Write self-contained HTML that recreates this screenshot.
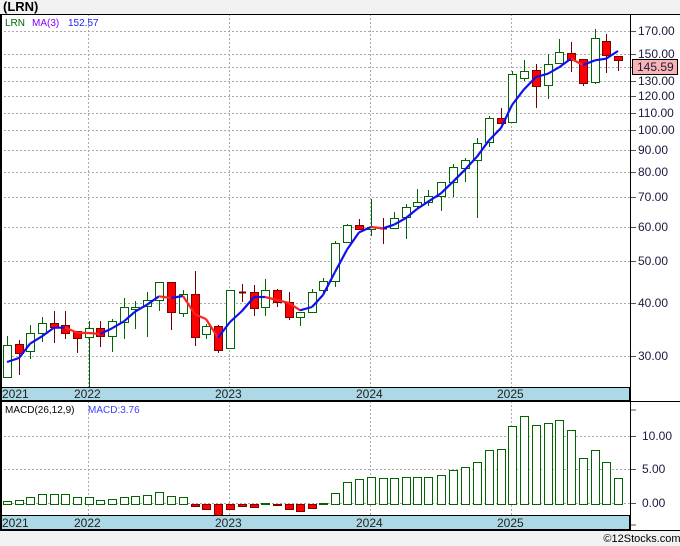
<!DOCTYPE html>
<html><head><meta charset="utf-8"><style>
html,body{margin:0;padding:0;background:#f2f2f2;}
svg{display:block;font-family:"Liberation Sans",sans-serif;}
</style></head><body>
<svg id="s" width="680" height="546" viewBox="0 0 680 546" xmlns="http://www.w3.org/2000/svg">
<rect x="0" y="0" width="680" height="546" fill="#f2f2f2"/>
<text x="3" y="11" font-size="13" font-weight="bold" fill="#000">(LRN)</text>
<rect x="0" y="14" width="680" height="516" fill="#fff"/>
<g id="g"></g>
<text x="642" y="542" font-size="11" fill="#000" text-anchor="middle">©12Stocks.com</text>
</svg>
<script>
var g=document.getElementById('g'),h='';
function L(x1,y1,x2,y2,c,w,d){h+='<line x1="'+x1+'" y1="'+y1+'" x2="'+x2+'" y2="'+y2+'" stroke="'+c+'" stroke-width="'+(w||1)+'"'+(d?' stroke-dasharray="'+d+'"':'')+'/>';}
function R(x,y,w,hh,f,s){h+='<rect x="'+x+'" y="'+y+'" width="'+w+'" height="'+hh+'" fill="'+f+'" stroke="'+s+'" stroke-width="1"/>';}
function T(x,y,t,c,s,a){h+='<text x="'+x+'" y="'+y+'" font-size="'+(s||11)+'" fill="'+c+'"'+(a?' text-anchor="'+a+'"':'')+'>'+t+'</text>';}
var prices=[[170,31],[150,54],[140,67],[130,81],[120,96],[110,113],[100,130],[90,150],[80,172],[70,197],[60,227],[50,261],[40,303],[30,356]];
prices.forEach(function(p){L(0,p[1]+.5,630,p[1]+.5,'#aaa',1,'2,2');L(630,p[1]+.5,636,p[1]+.5,'#555',1);if(p[0]!=140)T(638,p[1]+4,p[0].toFixed(2),'#1a1a40',12);});
[88.5,229.5,370.5,511.5].forEach(function(x){L(x,14,x,387,'#aaa',1,'2,2');L(x,401,x,515,'#aaa',1,'2,2');});
[[10,436],[5,469],[0,503]].forEach(function(p){L(0,p[1]+.5,630,p[1]+.5,'#aaa',1,'2,2');L(630,p[1]+.5,636,p[1]+.5,'#555',1);T(642,p[1]+4,p[0].toFixed(2),'#1a1a40',12);});
L(630,410,636,410,'#555');L(630,525,636,525,'#555');
var C=[[7,336,345,377,377,'g'],[19,340,344,353,375,'r'],[30,325,333,351,359,'g'],[42,317,323,333,342,'g'],[54,311,323,327,343,'r'],[65,311,325,333,339,'r'],[77,331,331,338,353,'r'],[89,321,328,337,387,'g'],[100,321,328,336,347,'r'],[112,319,321,336,352,'g'],[124,298,307,322,339,'g'],[135,301,307,309,329,'g'],[147,292,300,306,337,'g'],[159,282,282,300,311,'g'],[171,282,282,312,330,'r'],[183,290,294,313,317,'g'],[195,271,294,337,346,'r'],[206,324,326,334,339,'g'],[218,325,326,350,353,'r'],[230,290,290,348,349,'g'],[242,284,291,293,302,'d'],[254,285,292,308,316,'r'],[265,279,290,307,316,'g'],[277,289,290,302,307,'r'],[289,292,302,317,320,'r'],[300,312,312,317,326,'g'],[312,289,292,312,312,'g'],[323,278,281,290,294,'g'],[335,241,243,281,287,'g'],[347,224,225,242,242,'g'],[359,219,225,229,230,'r'],[371,199,227,229,236,'g'],[383,218,227,229,244,'d'],[394,212,218,228,228,'g'],[406,204,207,217,239,'g'],[417,189,202,206,208,'g'],[428,190,196,202,206,'g'],[441,182,182,196,211,'g'],[453,164,167,182,197,'g'],[465,158,160,168,182,'g'],[477,138,143,160,218,'g'],[489,116,118,142,147,'g'],[501,108,118,123,123,'r'],[512,71,74,122,122,'g'],[524,60,71,78,81,'g'],[536,64,70,86,108,'r'],[548,54,64,85,99,'g'],[559,39,52,63,63,'g'],[571,42,53,60,72,'r'],[583,59,59,83,86,'r'],[595,29,38,82,84,'g'],[606,34,41,55,73,'r'],[618,56,56,60,71,'r']];
var closes=[];
C.forEach(function(c){var x=c[0];var col=c[5]=='g'?'#006400':'#6b0000';
L(x+.5,c[1],x+.5,c[4],col,1);
if(c[5]=='d'){L(x-3,c[2]+1.5,x+4,c[2]+1.5,'#6b0000',2);}
else R(x-3.5,c[2]+.5,8,Math.max(1,c[3]-c[2]),c[5]=='g'?'#fff':'#f00',c[5]=='g'?'#006400':'#800000');
closes.push(c[5]=='g'?c[2]:c[3]);});
var ma=[];for(var i=0;i<closes.length;i++){var a=closes.slice(Math.max(0,i-2),i+1);ma.push(a.reduce(function(s,v){return s+v},0)/a.length);}
ma[0]=362;ma[1]=358;
for(var i=1;i<ma.length;i++){var col=ma[i]>ma[i-1]+0.3?'#f22':'#1010ee';L(C[i-1][0],ma[i-1],C[i][0],ma[i],col,2.2);}
var M=[501,500,497,494,494,494,497,497,500,499,497,496,495,492,496,497,506,509,515,509,506,507,503,505,509,511,508,503,493,482,479,477,478,478,477,477,477,475,470,467,462,450,449,426,416,425,423,420,430,458,450,462,478];
M.forEach(function(v,i){var x=C[i][0];if(v<504)R(x-3.5,v+.5,8,504-v,'#fff','#006400');else R(x-3.5,504.5,8,v-504,'#f00','#800000');});
R(0.5,387.5,629,13,'#add8e6','#000');R(0.5,515.5,629,14,'#add8e6','#000');
[[2,'2021'],[74,'2022'],[215,'2023'],[356,'2024'],[497,'2025']].forEach(function(d){T(d[0],398,d[1],'#222',12);T(d[0],527,d[1],'#222',12);});
L(0,14.5,680,14.5,'#000',1);L(1,14,1,530,'#000',2);L(630.5,14,630.5,530,'#000',1);L(0,401.5,680,401.5,'#000',1);L(0,530.5,680,530.5,'#000',1);
T(5,26,'LRN','#006400',10);T(32,26,'MA(3)','#8000ff',10);T(68,26,'152.57','#2020ff',10);
T(5,413,'MACD(26,12,9)','#000',10);T(88,413,'MACD:3.76','#4040ff',10);
R(632.5,59.5,45,15,'#f8b4b4','#000');T(637,71,'145.59','#1a1a40',12);
g.innerHTML=h;
</script>
</body></html>
